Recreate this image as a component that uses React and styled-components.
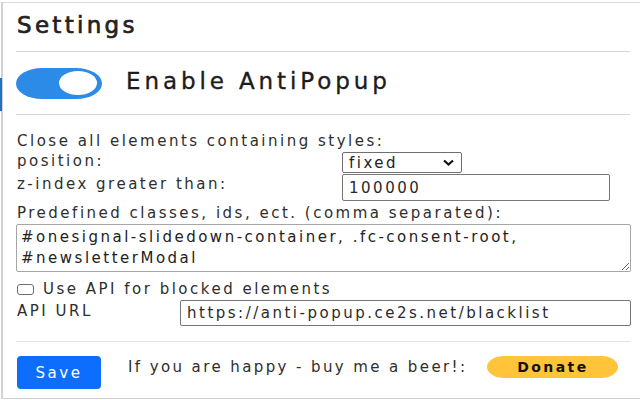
import React from "react";
import styled, { createGlobalStyle } from "styled-components";

const Global = createGlobalStyle`
  html, body { margin: 0; padding: 0; background: #fff; }
  body { font-family: "DejaVu Sans", "Noto Sans", sans-serif; color: #2e2e2e; }
  * { box-sizing: border-box; }
`;

const Frame = styled.div`
  position: relative;
  width: 640px;
  height: 400px;
  padding: 2px 0 1px 3px;
  overflow: hidden;
  &::before {
    content: "";
    position: absolute;
    left: 1px; top: 2px; bottom: 1px;
    width: 2px;
    background: #d2d2d2;
  }
  &::after {
    content: "";
    position: absolute;
    left: 0; top: 78px;
    width: 2px; height: 33px;
    background: #1f6fc2;
  }
`;

const Panel = styled.div`
  height: 100%;
  border-top: 1px solid #dadada;
  border-bottom: 1px solid #cfcfcf;
  padding: 0 10px 0 13px;
  display: flex;
  flex-direction: column;
  letter-spacing: 2.5px;
`;

const Title = styled.h1`
  margin: 0;
  padding: 9px 0 12px 1px;
  line-height: 27px;
  font-size: 23px;
  font-weight: 400;
  letter-spacing: 3.3px;
  color: #222;
  -webkit-text-stroke: 0.7px #222;
`;

const Divider = styled.hr`
  margin: ${p => p.$top || 0}px 0 0;
  border: 0;
  border-top: 1px solid ${p => p.$light ? "#e4e4e4" : "#d6d6d6"};
`;

const EnableRow = styled.div`
  height: 62px;
  display: flex;
  align-items: center;
  gap: 24px;
`;

const Toggle = styled.div`
  width: 86px;
  height: 31px;
  border-radius: 26px / 15.5px;
  background: #2b8be6;
  display: flex;
  align-items: center;
  justify-content: flex-end;
  padding-right: 5px;
`;

const Knob = styled.div`
  width: 38px;
  height: 24px;
  border-radius: 50%;
  background: #fff;
`;

const EnableLabel = styled.span`
  font-size: 23px;
  letter-spacing: 3.9px;
  color: #1c1c1c;
  padding-bottom: 5px;
  -webkit-text-stroke: 0.35px #1c1c1c;
`;

const Section = styled.div`
  padding-top: 16px;
  display: flex;
  flex-direction: column;
  font-size: 15px;
  line-height: 20px;
`;

const Line = styled.div`
  height: ${p => p.$h || 20}px;
  margin-top: ${p => p.$top || 0}px;
  padding-left: 1px;
  display: flex;
  align-items: center;
  gap: 9px;
`;

const FieldRow = styled.div`
  display: grid;
  grid-template-columns: ${p => p.$col}px 1fr;
  align-items: start;
  height: ${p => p.$h}px;
  margin-top: ${p => p.$top || 0}px;
  padding-left: 1px;
`;

const Label = styled.span`
  padding-top: ${p => p.$pad || 0}px;
`;

const SelectBox = styled.div`
  width: 120px;
  height: 21px;
  margin-top: 1px;
  border: 1px solid #6e6e6e;
  border-radius: 2px;
  display: flex;
  align-items: center;
  justify-content: space-between;
  padding: 0 6px 0 6px;
  color: #222;
`;

const TextInput = styled.input`
  width: ${p => p.$w}px;
  height: ${p => p.$hh}px;
  border: 1px solid #767676;
  border-radius: 2px;
  padding: 0 6px;
  font: inherit;
  letter-spacing: inherit;
  color: #2a2a2a;
  background: #fff;
  outline: none;
`;

const TextArea = styled.textarea`
  width: 615px;
  height: 48px;
  margin-top: 1px;
  border: 1px solid #a6a6a6;
  border-radius: 2px;
  padding: 2px 4px;
  font: inherit;
  letter-spacing: inherit;
  line-height: 21px;
  color: #222;
  resize: both;
  overflow: hidden;
  white-space: pre;
  outline: none;
`;

const Check = styled.span`
  width: 17px;
  height: 11px;
  border: 1px solid #6e6e6e;
  border-radius: 3px;
  flex: none;
`;

const Footer = styled.div`
  display: flex;
  align-items: flex-start;
  padding-top: 14px;
  padding-left: 1px;
  font-size: 15px;
  line-height: 20px;
`;

const SaveButton = styled.button`
  width: 84px;
  height: 33px;
  border: 0;
  border-radius: 4px;
  background: #0d6efd;
  color: #fff;
  font: inherit;
  letter-spacing: inherit;
  padding: 0;
  margin-right: 27px;
`;

const Happy = styled.span`
  margin-top: 1px;
  margin-right: 20px;
  letter-spacing: 2.4px;
`;

const Donate = styled.button`
  width: 131px;
  height: 22px;
  border: 0;
  border-radius: 17px / 11px;
  background: #ffc439;
  color: #111;
  font: inherit;
  font-size: 14px;
  font-weight: 700;
  letter-spacing: 2.4px;
  padding: 0;
`;

export default function App() {
  return (
    <>
      <Global />
      <Frame>
        <Panel>
          <Title>Settings</Title>
          <Divider />
          <EnableRow>
            <Toggle><Knob /></Toggle>
            <EnableLabel>Enable AntiPopup</EnableLabel>
          </EnableRow>
          <Divider />
          <Section>
            <Line>Close all elements containing styles:</Line>
            <FieldRow $col={325} $h={23}>
              <Label>position:</Label>
              <SelectBox>
                <span>fixed</span>
                <svg width="13" height="8" viewBox="0 0 13 8">
                  <path d="M2 1.5 L6.5 5.5 L11 1.5" fill="none" stroke="#111" strokeWidth="2.2" />
                </svg>
              </SelectBox>
            </FieldRow>
            <FieldRow $col={325} $h={27}>
              <Label>z-index greater than:</Label>
              <TextInput $w={268} $hh={27} defaultValue="100000" readOnly />
            </FieldRow>
            <Line $h={21} $top={1}>Predefined classes, ids, ect. (comma separated):</Line>
            <TextArea
              readOnly
              defaultValue={"#onesignal-slidedown-container, .fc-consent-root,\n#newsletterModal"}
            />
            <Line $top={7}><Check />Use API for blocked elements</Line>
            <FieldRow $col={163} $h={26} $top={1}>
              <Label $pad={1}>API URL</Label>
              <TextInput $w={451} $hh={26} defaultValue="https://anti-popup.ce2s.net/blacklist" readOnly />
            </FieldRow>
          </Section>
          <Divider $light $top={15} />
          <Footer>
            <SaveButton>Save</SaveButton>
            <Happy>If you are happy - buy me a beer!:</Happy>
            <Donate>Donate</Donate>
          </Footer>
        </Panel>
      </Frame>
    </>
  );
}
